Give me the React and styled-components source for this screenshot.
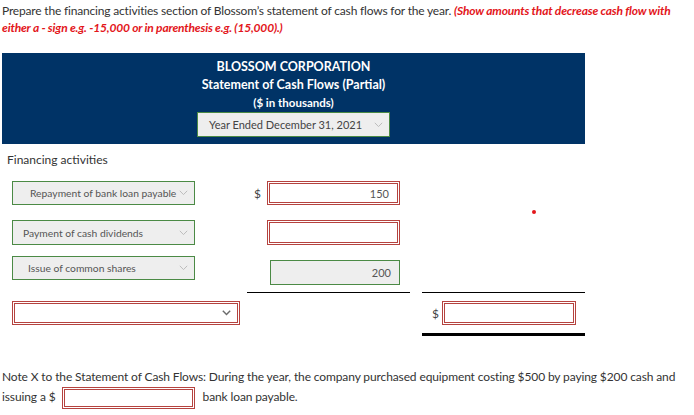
import React from 'react'
import styled, { createGlobalStyle } from 'styled-components'

const GlobalStyle = createGlobalStyle`
  body {
    margin: 0;
    background: #fff;
    color: #333;
    font-family: Lato, "Open Sans", "Liberation Sans", sans-serif;
  }
`

const Page = styled.div`
  width: 694px;
  padding: 2px 0 0 2px;
  box-sizing: border-box;
`

const Prompt = styled.p`
  margin: 0;
  width: 688px;
  font-size: 12px;
  line-height: 17px;
  letter-spacing: -0.18px;
`

const Hint = styled.span`
  color: #e3161b;
  font-style: italic;
  font-weight: 700;
`

const Header = styled.div`
  margin-top: 17px;
  width: 583px;
  height: 91px;
  box-sizing: border-box;
  padding-top: 5px;
  background: #003366;
  color: #fff;
  display: flex;
  flex-direction: column;
  align-items: center;
`

const HeadLine = styled.div`
  font-size: ${({ small }) => (small ? '11.5px' : '12.5px')};
  font-weight: 700;
  line-height: 18px;
`

const Chevron = ({ dark }) => (
  <svg width="9" height="6" viewBox="0 0 9 6">
    <path d="M0.8 0.8 L4.5 4.6 L8.2 0.8" fill="none" stroke={dark ? '#6b6b6b' : '#bcbcbc'} strokeWidth={dark ? 1.4 : 1} />
  </svg>
)

const Picker = styled.div`
  box-sizing: border-box;
  width: ${({ w }) => w}px;
  height: ${({ h }) => h || 24}px;
  margin-top: ${({ top }) => top || 0}px;
  margin-left: ${({ left }) => left || 0}px;
  padding: 0 6px 0 ${({ indent }) => indent}px;
  display: flex;
  align-items: center;
  justify-content: space-between;
  background: ${({ empty }) => (empty ? '#fff' : '#eee')};
  border: ${({ empty }) => (empty ? '3px double #b5433f' : '1px solid #4b8a45')};
  color: ${({ tone }) => tone || '#555'};
  font-size: ${({ fs }) => fs || 10.3}px;
  white-space: nowrap;
`

const Label = styled.div`
  margin-top: 8px;
  padding-left: 5px;
  font-size: 12px;
  line-height: 16px;
`

const Row = styled.div`
  display: grid;
  grid-template-columns: 245px 163px 12px 163px;
  margin-top: ${({ top }) => top || 0}px;
  align-items: start;
`

const Cell = styled.div`
  position: relative;
  display: flex;
  align-items: center;
  justify-content: ${({ start }) => (start ? 'flex-start' : 'flex-end')};
  box-sizing: border-box;
  height: ${({ h }) => (h ? `${h}px` : 'auto')};
  padding: ${({ pad }) => pad || '0 10px 0 0'};
  border-bottom: ${({ rule }) => rule || 'none'};
`

const Dollar = styled.span`
  font-size: 12px;
  color: #444;
  margin-right: ${({ gap }) => gap || 6}px;
`

const Amount = styled.div`
  box-sizing: border-box;
  width: ${({ w }) => w || 133}px;
  height: ${({ h }) => h || 24}px;
  padding-right: 8px;
  display: flex;
  align-items: center;
  justify-content: flex-end;
  background: ${({ given }) => (given ? '#eee' : '#fff')};
  border: ${({ given }) => (given ? '1px solid #4b8a45' : '3px double #b5433f')};
  color: #555;
  font-size: 11px;
`

const Dot = styled.span`
  position: absolute;
  left: 110px;
  top: 29px;
  width: 4px;
  height: 4px;
  border-radius: 50%;
  background: #e3161b;
`

const Note = styled.p`
  margin: 31px 0 0;
  font-size: 12px;
  line-height: 20px;
  letter-spacing: -0.12px;
`

const InlineAmount = styled(Amount)`
  display: inline-flex;
  vertical-align: middle;
  margin: 0 8px 0 6px;
  height: 22px;
`

export default function App() {
  return (
    <Page>
      <GlobalStyle />
      <Prompt>
        Prepare the financing activities section of Blossom’s statement of cash flows for the year.{' '}
        <Hint>(Show amounts that decrease cash flow with either a - sign e.g. -15,000 or in parenthesis e.g. (15,000).)</Hint>
      </Prompt>

      <Header>
        <HeadLine>BLOSSOM CORPORATION</HeadLine>
        <HeadLine>Statement of Cash Flows (Partial)</HeadLine>
        <HeadLine small>($ in thousands)</HeadLine>
        <Picker w={193} h={25} indent={11} fs={11} tone="#444">
          Year Ended December 31, 2021
          <Chevron />
        </Picker>
      </Header>

      <Label>Financing activities</Label>

      <Row top={13}>
        <Picker w={183} left={10} indent={17}>
          Repayment of bank loan payable
          <Chevron />
        </Picker>
        <Cell>
          <Dollar>$</Dollar>
          <Amount>150</Amount>
        </Cell>
        <div />
        <Cell start>
          <Dot />
        </Cell>
      </Row>

      <Row top={15}>
        <Picker w={183} h={25} left={10} indent={10}>
          Payment of cash dividends
          <Chevron />
        </Picker>
        <Cell>
          <Amount h={25} />
        </Cell>
      </Row>

      <Row top={11}>
        <Picker w={183} left={10} indent={15}>
          Issue of common shares
          <Chevron />
        </Picker>
        <Cell pad="4px 10px 7px 0" rule="1px solid #000">
          <Amount given w={130} h={25}>200</Amount>
        </Cell>
        <div />
        <Cell pad="0" h={37} rule="1px solid #000" />
      </Row>

      <Row>
        <Picker empty w={228} top={8} left={10} indent={8}>
          <span />
          <Chevron dark />
        </Picker>
        <div />
        <div />
        <Cell start pad="8px 0 8px 10px" rule="3px solid #000">
          <Dollar gap={3}>$</Dollar>
          <Amount w={134} />
        </Cell>
      </Row>

      <Note>
        Note X to the Statement of Cash Flows: During the year, the company purchased equipment costing $500 by paying $200 cash and issuing a $
        <InlineAmount w={133} />
        bank loan payable.
      </Note>
    </Page>
  )
}
